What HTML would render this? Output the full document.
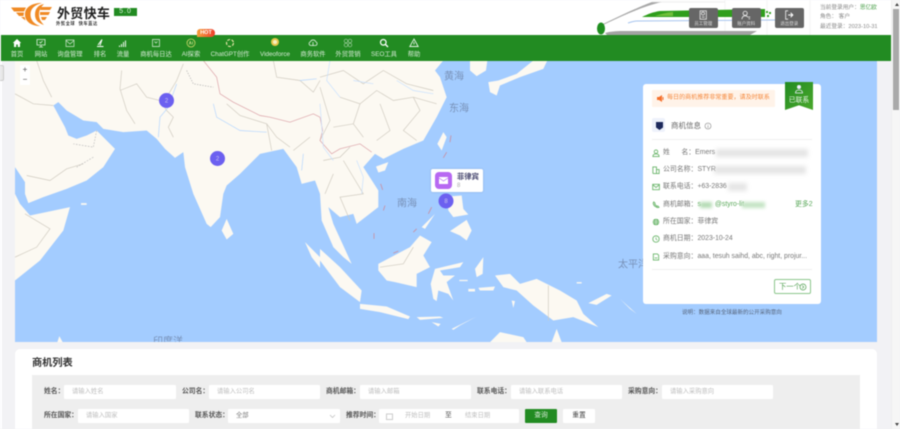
<!DOCTYPE html>
<html lang="zh"><head><meta charset="utf-8"><title>外贸快车</title>
<style>
*{box-sizing:border-box;margin:0;padding:0}
html,body{width:900px;height:429px;overflow:hidden;background:#f2f2f5}
body{font-family:"Liberation Sans","Noto Sans CJK SC",sans-serif;position:relative;color:#555}
#w{position:absolute;left:0;top:0;width:900px;height:429px;filter:blur(.4px);overflow:hidden}
.a{position:absolute;white-space:nowrap}
.hd{left:0;top:0;width:892px;height:35px;background:#fff}
.nav{left:1px;top:35px;width:890px;height:25.500px;background:#228b22}
.ni{position:absolute;top:50px;transform:translateX(-50%);font-size:6.300px;line-height:10px;color:#d6ead6;white-space:nowrap}
.ic{position:absolute;top:38px;width:10px;height:10px;transform:translateX(-50%)}
.tb{position:absolute;top:8px;width:28.500px;height:20px;background:#666;border-radius:2px;color:#ddd;font-size:4.500px;text-align:center;line-height:5px}
.tb svg{display:block;margin:2px auto 1px;width:10px;height:10px}
.card{left:643px;top:84px;width:178px;height:220px;background:#fff;border-radius:3px}
.row{position:absolute;left:663px;font-size:6.900px;line-height:10px;color:#777;white-space:nowrap}
.ri{position:absolute;left:651.500px;width:8px;height:8px}
.bl{position:absolute;height:8px;background:#d8d8d8;filter:blur(2px);opacity:.65}
.lb{position:absolute;font-size:6.800px;font-weight:bold;line-height:10px;color:#555;white-space:nowrap}
.in{position:absolute;height:14px;background:#fff;border-radius:1px;font-size:6.300px;line-height:14px;color:#bdbdbd;padding-left:8px;white-space:nowrap}
</style></head><body><div id="w">

<div class="a hd"></div>
<!-- logo -->
<svg class="a" style="left:0;top:0" width="56" height="30" viewBox="0 0 56 30">
<g fill="#f08a24">
<path d="M11 7.500h15l-2 4H14z"/><path d="M16 12.500h8l-.5 3.500H19z"/><path d="M21 17h3.500l1 3.500z"/>
<path d="M42 3c-10 0-17 4-17 11.500s7 11.500 15 11.500c-6-2-9.500-6-9.500-11.500S34 5 42 3z"/>
<path d="M44 4c-6 1-9 5-9 10.500S38 23 44 25c-3-3-5-6-5-10.500S41 7 44 4z"/>
<path d="M41 7h11l-2 3H40zM40 12h10l-1.500 3H40zM41 17h6l-2 3h-3z"/></g></svg>
<div class="a" style="left:57px;top:5px;font-size:13px;font-weight:bold;line-height:17px;color:#222;letter-spacing:.3px">外贸快车</div>
<div class="a" style="left:114px;top:8px;width:23px;height:8px;background:#228b22;color:#dff3df;font-size:7px;line-height:8px;text-align:center;letter-spacing:1px">5.0</div>
<div class="a" style="left:56px;top:21px;font-size:4.300px;font-weight:bold;line-height:6px;color:#333;letter-spacing:.5px">外贸全球 &nbsp;快车直达</div>

<!-- train -->
<svg class="a" style="left:590px;top:0" width="240" height="35" viewBox="0 0 240 35">
<path d="M135 0V35M177 0V35M220 0V35" stroke="#eee" stroke-width=".6"/>
<path d="M13 24C30 16 46 8 62 2h10C54 6 34 15 13 25z" fill="#a8a8a8"/>
<path d="M62 2H135" stroke="#ddd" stroke-width=".6"/>
<path d="M52 17C58 14 63 12 70 11L175 9V17z" fill="#2f9e1c"/>
<path d="M65 16C71 14 76 12.500 83 12v4z" fill="#6fbf3a"/>
<path d="M38 23C41 22 44 21 47 21L187 20" stroke="#a6c4ee" stroke-width="1" fill="none"/>
<ellipse cx="11" cy="28.500" rx="4" ry="6" fill="#1f8f1f"/>
<path d="M15 33C20 31.500 26 31 33 31H167L160 35H17z" fill="#a3a3a3"/>
<path d="M176 11h2v2h-2zM179 12h2v2h-2zM177 15h2v2h-2z" fill="#3aa52a"/>
</svg>
<div class="tb" style="left:689px"><svg viewBox="0 0 12 12"><path d="M2.500 1h7.500v10H2.500zM4.500 8.500h3.500M6 2.500a1.800 1.800 0 1 1 0 3.600 1.800 1.800 0 0 1 0-3.600z" stroke="#e4e4e4" fill="none"/></svg>员工管理</div>
<div class="tb" style="left:732px"><svg viewBox="0 0 12 12"><path d="M5 1.500a2.500 2.500 0 1 1 0 5 2.500 2.500 0 0 1 0-5zM1 11c.5-3 2-4 4-4s3 1 3.500 2M9 8.500h2M9 10.500h2" stroke="#eee" fill="none"/></svg>账户资料</div>
<div class="tb" style="left:775px"><svg viewBox="0 0 12 12"><path d="M5 1H2v10h3" stroke="#eee" fill="none"/><path d="M5 6h5M8 3.500 10.500 6 8 8.500" stroke="#fff" stroke-width="1.300" fill="none"/></svg>退出登录</div>
<div class="a" style="left:820px;top:3.500px;font-size:5.700px;line-height:9.500px;color:#888">当前登录用户：<span style="color:#4a9f4a">思亿欧</span><br>角色： 客户<br>最近登录：2023-10-31</div>

<!-- nav -->
<div class="a nav"></div>
<svg class="ic" style="left:17px" viewBox="0 0 10 10"><path d="M5 1 .8 5H2v4h2.200V6.500h1.600V9H8V5h1.200z" fill="#fff"/></svg>
<svg class="ic" style="left:41px" viewBox="0 0 10 10"><path d="M1 1.500h8v5.500H1zM3 9h4M5 7v2M3.500 4l1 1 2-2" stroke="#dff0df" stroke-width=".8" fill="none"/></svg>
<svg class="ic" style="left:70px" viewBox="0 0 10 10"><path d="M1 2h8v6.500H1zM1 2.500l4 3.500 4-3.500" stroke="#cfe6cf" stroke-width=".7" fill="none"/></svg>
<svg class="ic" style="left:100px" viewBox="0 0 10 10"><path d="M2 8.500h6.500M3 7 7 1.500 5 7.500" stroke="#fff" stroke-width="1" fill="none"/></svg>
<svg class="ic" style="left:123px" viewBox="0 0 10 10"><path d="M1.500 9V7.500M3.500 9V6M5.500 9V4M7.500 9V2.500" stroke="#dff0df" stroke-width="1.100"/></svg>
<svg class="ic" style="left:156px" viewBox="0 0 10 10"><path d="M1.500 1.500h7v7h-7zM3.500 3.500l1.500 1.500 1.500-1.500" stroke="#dff0df" stroke-width=".7" fill="none"/></svg>
<svg class="ic" style="left:191px" viewBox="0 0 10 10"><circle cx="5" cy="5" r="4" stroke="#cfd96a" stroke-width=".8" fill="none"/><path d="M3.200 6.500 4.200 3.500 5.200 6.500M6.500 3.500V6.500" stroke="#e8ee9a" stroke-width=".6" fill="none"/></svg>
<svg class="ic" style="left:230px" viewBox="0 0 10 10"><circle cx="5" cy="5" r="3.500" stroke="#f2ecb0" stroke-width="1.100" stroke-dasharray="3 1.500" fill="none"/></svg>
<svg class="ic" style="left:275px" viewBox="0 0 10 10"><circle cx="5" cy="4" r="4" fill="#e6c64a"/><circle cx="5" cy="4" r="2" fill="#f6f0c0"/></svg>
<svg class="ic" style="left:313px" viewBox="0 0 10 10"><path d="M2.500 7.500a2 2 0 0 1 0-3.800 2.800 2.800 0 0 1 5.200 0 2 2 0 0 1 0 3.800zM5 4v4" stroke="#dff0df" stroke-width=".8" fill="none"/></svg>
<svg class="ic" style="left:348px" viewBox="0 0 10 10"><g stroke="#9fce9f" stroke-width=".7" fill="none"><circle cx="3" cy="3" r="1.800"/><circle cx="7" cy="3" r="1.800"/><circle cx="3" cy="7" r="1.800"/><circle cx="7" cy="7" r="1.800"/></g></svg>
<svg class="ic" style="left:384px" viewBox="0 0 10 10"><circle cx="4.300" cy="4.300" r="2.800" stroke="#fff" stroke-width="1.200" fill="none"/><path d="M6.500 6.500 9 9" stroke="#fff" stroke-width="1.300"/></svg>
<svg class="ic" style="left:414px" viewBox="0 0 10 10"><path d="M5 1 9.200 8.500H.8zM5 4v2.500" stroke="#e6f3e6" stroke-width=".9" fill="none"/></svg>
<div class="ni" style="left:17px">首页</div><div class="ni" style="left:41px">网站</div><div class="ni" style="left:70px">询盘管理</div><div class="ni" style="left:100px">排名</div><div class="ni" style="left:123px">流量</div><div class="ni" style="left:156px">商机每日达</div><div class="ni" style="left:191px">AI探索</div><div class="ni" style="left:230px">ChatGPT创作</div><div class="ni" style="left:275px">Videoforce</div><div class="ni" style="left:313px">商务软件</div><div class="ni" style="left:348px">外贸营销</div><div class="ni" style="left:384px">SEO工具</div><div class="ni" style="left:414px">帮助</div>
<div class="a" style="left:197px;top:28.500px;width:18px;height:8px;border-radius:3px 4px 4px 0;background:linear-gradient(90deg,#f4a13c,#ee3b2c);color:#fff;font-size:5.500px;font-weight:bold;line-height:8px;text-align:center">HOT</div>

<!-- left strip -->
<div class="a" style="left:0;top:61px;width:2px;height:368px;background:#fff"></div>
<div class="a" style="left:0;top:65px;width:4px;height:16px;background:#e8e8e8;border:1px solid #ccc;border-left:0;border-radius:0 2px 2px 0"></div>

<!-- map -->
<svg class="a" style="left:15px;top:60.500px" width="862" height="281.500" viewBox="15 60.500 862 281.500">
<rect x="15" y="60" width="862" height="282" fill="#a3ccff"/>
<g transform="translate(0,60) scale(.33333)" fill="#fcf9f2">
<path d="M45 0H1330L1305 30 1320 50 1340 110 1310 170 1270 240 1210 265 1150 295 1125 280 1090 320 1135 390 1135 440 1070 490 1060 460 1020 470 985 440 1000 490 1055 610 1030 590 1000 560 965 480 960 400 945 360 905 370 890 320 850 265 780 280 720 340 680 375 670 400 660 470 632 500 620 490 580 400 555 320 550 275 525 292 495 265 470 235 440 210 370 215 310 205 290 185 250 180 200 150 175 125 160 135 195 200 205 225 230 235 260 225 290 210 345 265 310 320 260 360 200 385 130 410 85 428 75 400 75 365 45 320z"/>
<path d="M45 400 60 430 90 465 210 440 190 510 120 600 45 660z"/>
<path d="M680 475 700 520 680 537 665 510z"/>
<path d="M915 545 960 590V622L935 590z"/>
<path d="M243 428h17v5h-17zM172 845l6-18 10 18z"/>
</g>
<g transform="translate(320,60) scale(.33333)" fill="#fcf9f2">
<path d="M450 0H502L498 30 470 47 450 30z"/>
<path d="M505 65 535 60 590 40 640 0H682L670 25 600 50 540 75 530 105 510 95z"/>
<path d="M370 215 380 230 365 270 352 250z"/>
<path d="M168 318 205 305 195 330 175 336z"/>
<path d="M0 565 60 620 125 690 120 725 60 680 0 600z"/>
<path d="M175 610 270 560 300 525 335 545 310 585 330 620 290 640 290 680 225 665 200 660 175 630z"/>
<path d="M120 730 200 738 270 768 265 776 180 755 120 745z"/>
<path d="M290 770 360 768 370 772 300 778zM335 785 362 790 355 798zM395 805 470 768 420 795 400 808z"/>
<path d="M345 625 430 605 420 620 360 630 370 645 405 645 380 665 400 720 385 700 355 690 350 722 340 715 332 670z"/>
<path d="M385 408 425 405 430 445 445 462 400 470 385 450zM390 512 440 478 455 510 440 540 420 525z"/>
<path d="M305 500 345 460 315 505zM465 625 490 590 488 640 470 650z"/>
<path d="M525 645 570 640 600 670 650 655 720 690 770 720 790 760 835 800 760 770 700 780 640 735 590 690 550 680z"/>
<path d="M445 685h20v8h-20zM475 682 525 678 520 690 480 690zM418 658h25v4h-25zM575 720 585 722 580 742zM805 728 860 700 875 705 830 733z"/>
<path d="M510 845 540 815 610 830 620 845zM695 845 710 805 725 845z"/>
<path d="M900 715 950 760 930 745zM770 665h15v4h-15z"/>
</g>
<!-- borders -->
<g transform="translate(0,60) scale(.33333)" fill="none" stroke="#cfcabf" stroke-width="2">
<path d="M110 0 130 60 155 110M365 30 360 85 380 150 405 190M360 90 410 70 440 110 480 120 500 150 520 170 505 200 520 230M550 10 530 60 500 110M680 130 720 165 800 190 830 230 870 260M820 0 830 50 900 60 940 95 960 60M45 100 100 130 160 135M80 345 150 360 200 325 250 310M75 460 150 505 110 560 45 590M800 190 815 270M930 230 880 270"/>
<path d="M290 210 280 260 220 250M280 290 230 320" stroke-dasharray="5 4" stroke="#bbb"/>
<path d="M560 30 580 70 640 80" stroke-dasharray="4 4" stroke="#aaa"/>
<path d="M610 0 650 50 660 100 700 125 780 165 810 170 870 185 940 160 960 170" stroke="#dba0a6"/>
</g>
<g transform="translate(320,60) scale(.33333)" fill="none" stroke="#cfcabf" stroke-width="2">
<path d="M0 50 70 30 130 70 190 30 260 70 340 90M60 110 120 130 170 90 220 120 280 110 350 130M100 190 120 130M180 130 210 210 170 240M280 110 300 150 250 210 290 240M40 200 100 190 130 230M10 300 60 290 90 260M70 300 130 400 60 410 90 480M15 400 40 340M0 80 30 180 0 240M180 620 250 610 280 560M685 675V780"/>
<path d="M0 170 8 210 0 240 35 280 60 265 120 250 155 275" stroke="#dba0a6"/>
<path d="M182 370 188 388M195 435 190 450M393 225 390 245M380 275 370 292M335 440 325 460M290 505 280 515M162 518V535M235 572 220 578" stroke="#c98ea0" stroke-width="2.500"/>
<path d="M30 0 20 60 60 110M100 60 160 70M230 60 280 90 340 100M0 130 10 260 40 300M110 300 130 350 125 400" stroke="#c7e0ff" stroke-width="2"/>
</g>
<g transform="translate(0,60) scale(.33333)" fill="none" stroke="#b3d5ff" stroke-width="2">
<path d="M530 70 505 140 480 170 475 230M640 130 650 170 720 210 800 215M900 60 950 55M910 280 905 330"/>
</g>
<g fill="#7891b8" font-size="10" font-family="Liberation Sans,Noto Sans CJK SC,sans-serif">
<text x="444" y="79">黄海</text><text x="449" y="111">东海</text><text x="397" y="206">南海</text><text x="618" y="267">太平洋</text><text x="153" y="344">印度洋</text>
</g>
<g text-anchor="middle" font-size="6" fill="#c8c4f0" font-family="Liberation Sans,sans-serif">
<circle cx="166.500" cy="100" r="7.500" fill="#6c60f0"/><text x="166.500" y="102">2</text>
<circle cx="217.500" cy="158" r="7.500" fill="#6c60f0"/><text x="217.500" y="160">2</text>
<circle cx="446" cy="200.500" r="7.500" fill="#6c60f0"/><text x="446" y="202.500">8</text>
</g>
</svg>
<div class="a" style="left:20px;top:65px;width:10px;height:20px;background:#fff;border-radius:1px;color:#555;font-size:8px;line-height:10px;text-align:center">+<br>−</div>
<!-- marker popup -->
<div class="a" style="left:431px;top:169px;width:52px;height:23px;background:#fff;border-radius:2px;box-shadow:0 0 2px rgba(0,0,0,.15)"></div>
<div class="a" style="left:435px;top:172px;width:17px;height:17px;background:#b768f2;border-radius:4px"></div>
<svg class="a" style="left:439px;top:177px" width="9" height="7" viewBox="0 0 9 7"><path d="M0 0h9v7H0z" fill="#fff"/><path d="M0 1l4.500 3L9 1" stroke="#b768f2" stroke-width=".7" fill="none"/></svg>
<div class="a" style="left:457px;top:172px;font-size:7.300px;font-weight:bold;line-height:10px;color:#4b4b72">菲律宾</div>
<div class="a" style="left:457px;top:182px;font-size:6px;line-height:8px;color:#aaa">8</div>

<!-- right card -->
<div class="a card"></div>
<div class="a" style="left:652px;top:90px;width:123px;height:17px;background:#fff3e9;border-radius:1px;color:#f5883c;font-size:6.050px;line-height:17px;padding-left:15px">每日的商机推荐非常重要，请及时联系</div>
<svg class="a" style="left:657px;top:95px" width="8" height="7" viewBox="0 0 8 7"><path d="M0 2h2L5 0v7L2 5H0z" fill="#f5702c"/><path d="M6 2v3" stroke="#f5702c"/></svg>
<div class="a" style="left:785px;top:82px;width:28px;height:28px;background:linear-gradient(135deg,#228b22,#4aa82c);clip-path:polygon(0 0,100% 0,100% 100%,50% 83%,0 100%);color:#e8f5e8;font-size:6.800px;line-height:9px;text-align:center;padding-top:14px">已联系</div>
<svg class="a" style="left:794px;top:84px" width="10" height="10" viewBox="0 0 10 10"><circle cx="5" cy="3" r="2" fill="#eef"/><path d="M1.500 9c0-2 1-3 3.500-3s3.500 1 3.500 3z" stroke="#eef" fill="none" stroke-width=".8"/></svg>
<div class="a" style="left:652px;top:118px;width:13px;height:14px;background:#eef2fb;border-radius:2px"></div>
<svg class="a" style="left:656px;top:121.500px" width="7" height="8" viewBox="0 0 7 8"><path d="M0 0h7v5.500L3.500 8 0 5.500z" fill="#1e2a5c"/></svg>
<div class="a" style="left:671px;top:121px;font-size:7.500px;line-height:10px;color:#666">商机信息</div>
<svg class="a" style="left:704px;top:122px" width="8" height="8" viewBox="0 0 8 8"><circle cx="4" cy="4" r="3" stroke="#888" fill="none" stroke-width=".6"/><path d="M4 3.500V6M4 2v.8" stroke="#888" stroke-width=".6"/></svg>
<div class="a" style="left:652px;top:139px;width:160px;height:1px;background:#f0f0f0"></div>

<svg class="ri" style="top:149px" viewBox="0 0 9 9"><circle cx="4.500" cy="3" r="2" stroke="#6ab56a" fill="none"/><path d="M1 8.500c0-2 1-3 3.500-3s3.500 1 3.500 3z" stroke="#6ab56a" fill="none"/></svg>
<svg class="ri" style="top:166px" viewBox="0 0 9 9"><path d="M1 8.500V1h4v7.500M5 4h3v4.500H1" stroke="#6ab56a" fill="none"/></svg>
<svg class="ri" style="top:183px" viewBox="0 0 9 9"><path d="M.8 1.500h7.500v6H.8zM.8 2l3.700 3L8.300 2" stroke="#6ab56a" fill="none"/></svg>
<svg class="ri" style="top:200.500px" viewBox="0 0 9 9"><path d="M2 1c-1.500 1.500 0 4 1.500 5s3.500 2 4.500 1L6.500 5.500 5.500 6 3 3.500l.5-1z" stroke="#6ab56a" fill="none"/></svg>
<svg class="ri" style="top:218px" viewBox="0 0 9 9"><circle cx="4.500" cy="4.500" r="3.700" fill="#6ab56a"/><path d="M1 3.500h7M1 5.500h7M4.500 1v7" stroke="#fff" stroke-width=".5"/></svg>
<svg class="ri" style="top:235px" viewBox="0 0 9 9"><circle cx="4.500" cy="4.500" r="3.600" stroke="#6ab56a" fill="none"/><path d="M4.500 2.500v2.200l1.500 1" stroke="#6ab56a" fill="none" stroke-width=".8"/></svg>
<svg class="ri" style="top:252.500px" viewBox="0 0 9 9"><path d="M1.500 1h4.500l1.500 1.500V8h-6zM3 5.500h3" stroke="#6ab56a" fill="none"/></svg>

<div class="row" style="top:147.500px">姓 &nbsp; &nbsp; &nbsp;名：Emers</div>
<div class="row" style="top:165px">公司名称：STYR</div>
<div class="row" style="top:182px">联系电话：+63-2836</div>
<div class="row" style="top:199.500px">商机邮箱：<span style="color:#5aa85a">s<span style="display:inline-block;width:14px"></span>@styro-lit</span></div>
<div class="a" style="left:795px;top:199.500px;font-size:6.900px;line-height:10px;color:#5aa85a">更多2</div>
<div class="row" style="top:217px">所在国家：菲律宾</div>
<div class="row" style="top:234px">商机日期：2023-10-24</div>
<div class="row" style="top:251.500px">采购意向：aaa, tesuh saihd, abc, right, projur...</div>
<div class="bl" style="left:716px;top:148.500px;width:92px"></div>
<div class="bl" style="left:714px;top:166px;width:92px"></div>
<div class="bl" style="left:728px;top:183px;width:19px"></div>
<div class="a" style="left:700px;top:201.500px;width:12px;height:6px;background:#b5dcb5;filter:blur(1.500px)"></div>
<div class="a" style="left:742px;top:201.500px;width:23px;height:6px;background:#c5e5c5;filter:blur(1.500px)"></div>
<div class="a" style="left:652px;top:269px;width:160px;height:1px;background:#f0f0f0"></div>
<div class="a" style="left:774px;top:279px;width:37px;height:15px;border:1px solid #8cc78c;border-radius:2px;color:#4f9f4f;font-size:7.300px;line-height:13px;padding-left:4px">下一个</div>
<svg class="a" style="left:799px;top:282.500px" width="8" height="8" viewBox="0 0 8 8"><circle cx="4" cy="4" r="3" stroke="#4f9f4f" fill="none" stroke-width=".7"/><path d="M3.200 2.500 4.800 4 3.200 5.500" stroke="#4f9f4f" fill="none" stroke-width=".7"/></svg>
<div class="a" style="left:682px;top:309px;font-size:5.550px;line-height:8px;color:#55637a">说明：数据来自全球最新的公开采购意向</div>

<!-- list -->
<div class="a" style="left:15px;top:349px;width:862px;height:90px;background:#fff;border-radius:5px 5px 0 0"></div>
<div class="a" style="left:32px;top:357px;font-size:10.200px;font-weight:bold;line-height:14px;color:#333">商机列表</div>
<div class="a" style="left:32px;top:375px;width:828px;height:60px;background:#eee"></div>

<div class="lb" style="left:44px;top:387px">姓名：</div><div class="in" style="left:64px;top:385px;width:112px">请输入姓名</div>
<div class="lb" style="left:182px;top:387px">公司名：</div><div class="in" style="left:209px;top:385px;width:111px">请输入公司名</div>
<div class="lb" style="left:326px;top:387px">商机邮箱：</div><div class="in" style="left:360px;top:385px;width:111px">请输入邮箱</div>
<div class="lb" style="left:477px;top:387px">联系电话：</div><div class="in" style="left:511px;top:385px;width:111px">请输入联系电话</div>
<div class="lb" style="left:628px;top:387px">采购意向：</div><div class="in" style="left:662px;top:385px;width:111px">请输入采购意向</div>

<div class="lb" style="left:44px;top:411px">所在国家：</div><div class="in" style="left:78px;top:409px;width:111px">请输入国家</div>
<div class="lb" style="left:195px;top:411px">联系状态：</div><div class="in" style="left:228px;top:409px;width:112px;color:#777">全部</div>
<svg class="a" style="left:329px;top:414px" width="7" height="5" viewBox="0 0 7 5"><path d="M1 1l2.500 2.500L6 1" stroke="#bbb" fill="none" stroke-width=".7"/></svg>
<div class="lb" style="left:346px;top:411px">推荐时间：</div><div class="in" style="left:379px;top:409px;width:140px"></div>
<svg class="a" style="left:386px;top:412.500px" width="7" height="7" viewBox="0 0 7 7"><path d="M.5 1h6v5.500h-6z" stroke="#ccc" fill="none"/></svg>
<div class="a" style="left:405px;top:409px;font-size:6.300px;line-height:14px;color:#bdbdbd">开始日期</div>
<div class="a" style="left:445px;top:409px;font-size:6.800px;line-height:14px;color:#555">至</div>
<div class="a" style="left:465px;top:409px;font-size:6.300px;line-height:14px;color:#bdbdbd">结束日期</div>
<div class="a" style="left:525px;top:409px;width:32px;height:14px;background:#228b22;border-radius:1px;color:#d6ead6;font-size:6.800px;line-height:14px;text-align:center">查询</div>
<div class="a" style="left:563px;top:409px;width:32px;height:14px;background:#fff;border-radius:1px;color:#444;font-size:6.800px;line-height:14px;text-align:center">重置</div>

<!-- scrollbar -->
<div class="a" style="left:891px;top:0;width:9px;height:429px;background:#f6f6f6;border-left:1px solid #eee"></div>
<div class="a" style="left:893px;top:9px;width:6px;height:101px;background:#a9a9a9"></div>
<div class="a" style="left:894.500px;top:3px;width:0;height:0;border:2px solid transparent;border-bottom:3px solid #444;border-top:0"></div>
<div class="a" style="left:894.500px;top:423px;width:0;height:0;border:2px solid transparent;border-top:3px solid #444;border-bottom:0"></div>
</div></body></html>
